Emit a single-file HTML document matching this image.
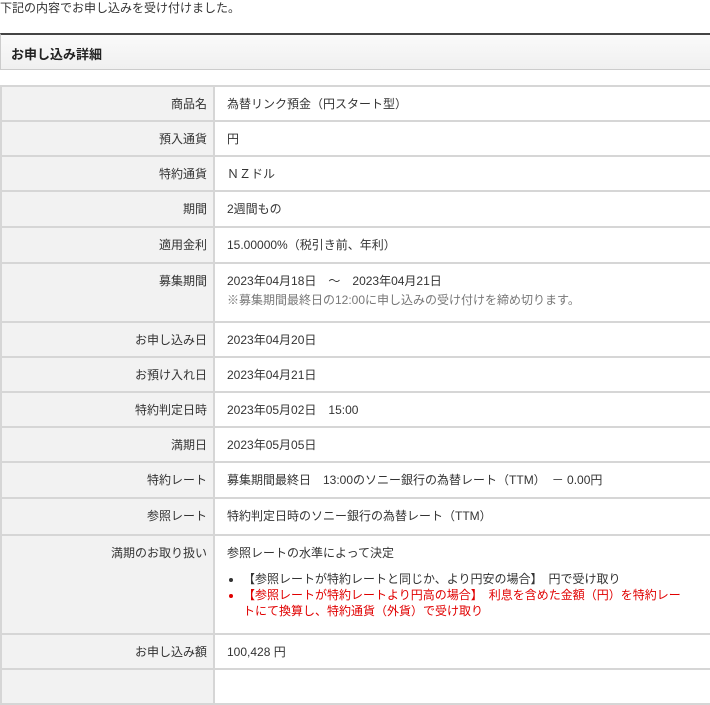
<!DOCTYPE html>
<html><head><meta charset="utf-8"><style>
body{margin:0;width:710px;height:674px;overflow:hidden;background:#fff;font-family:"Liberation Sans","Noto Sans CJK JP",sans-serif;font-size:12px;color:#333;}
.top{position:absolute;left:0;top:0;line-height:16px;}
.hd{position:absolute;left:0;top:33px;width:712px;height:34px;border-top:2px solid #444;border-bottom:1px solid #ccc;border-left:1px solid #ccc;background:linear-gradient(#fafafa,#f0f0f0);box-sizing:content-box;}
.hd span{position:absolute;left:10px;top:9px;font-weight:bold;font-size:13px;color:#222;}
table{position:absolute;left:0;top:85px;width:712px;border-collapse:collapse;}
td{border:2px solid #d6d6d6;padding:0 12px;vertical-align:top;line-height:16px;padding-top:9px;box-sizing:border-box;}
td.l{width:213px;background:#f2f2f2;text-align:right;padding-right:6px;}
.g{color:#777;}
.red{color:#e00000;padding-right:6px;}
ul{margin:10px 0 0 0;padding-left:16px;}
li{margin:0;}
</style></head><body>
<div class="top">下記の内容でお申し込みを受け付けました。</div>
<div class="hd"><span>お申し込み詳細</span></div>
<table>
<tr style="height:35px"><td class="l">商品名</td><td>為替リンク預金（円スタート型）</td></tr>
<tr style="height:35px"><td class="l">預入通貨</td><td>円</td></tr>
<tr style="height:35px"><td class="l">特約通貨</td><td>ＮＺドル</td></tr>
<tr style="height:36px"><td class="l">期間</td><td>2週間もの</td></tr>
<tr style="height:36px"><td class="l">適用金利</td><td>15.00000%（税引き前、年利）</td></tr>
<tr style="height:59px"><td class="l">募集期間</td><td>2023年04月18日　～　2023年04月21日<br><span class="g" style="line-height:22px">※募集期間最終日の12:00に申し込みの受け付けを締め切ります。</span></td></tr>
<tr style="height:35px"><td class="l">お申し込み日</td><td>2023年04月20日</td></tr>
<tr style="height:35px"><td class="l">お預け入れ日</td><td>2023年04月21日</td></tr>
<tr style="height:35px"><td class="l">特約判定日時</td><td>2023年05月02日　15:00</td></tr>
<tr style="height:35px"><td class="l">満期日</td><td>2023年05月05日</td></tr>
<tr style="height:36px"><td class="l">特約レート</td><td>募集期間最終日　13:00のソニー銀行の為替レート（TTM）　－ 0.00円</td></tr>
<tr style="height:37px"><td class="l">参照レート</td><td>特約判定日時のソニー銀行の為替レート（TTM）</td></tr>
<tr style="height:99px"><td class="l">満期のお取り扱い</td><td>参照レートの水準によって決定
<ul><li>【参照レートが特約レートと同じか、より円安の場合】　円で受け取り</li>
<li class="red">【参照レートが特約レートより円高の場合】　利息を含めた金額（円）を特約レートにて換算し、特約通貨（外貨）で受け取り</li></ul></td></tr>
<tr style="height:35px"><td class="l">お申し込み額</td><td>100,428 円</td></tr>
<tr style="height:35px"><td class="l"></td><td></td></tr>
</table>
</body></html>
